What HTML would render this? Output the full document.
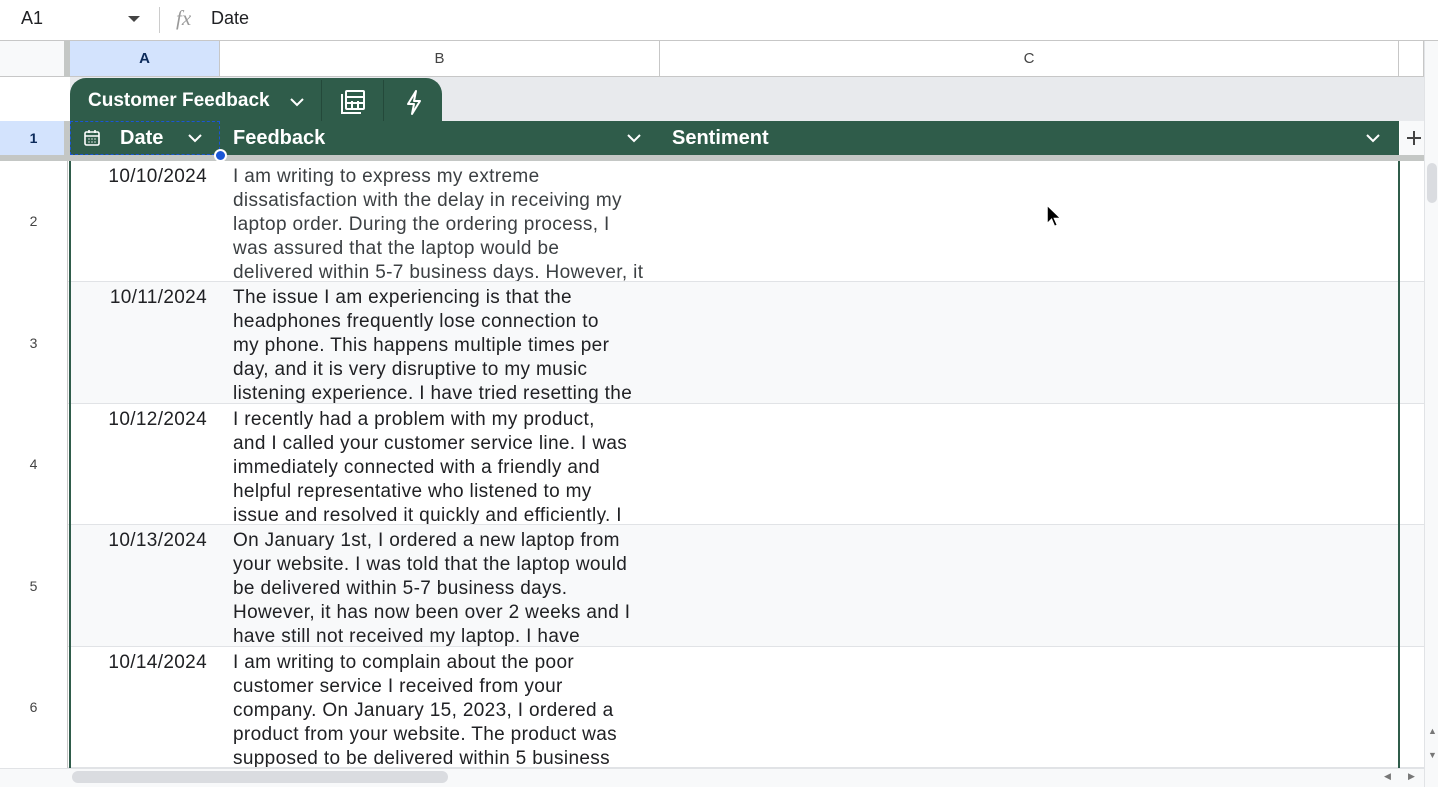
<!DOCTYPE html>
<html><head><meta charset="utf-8"><style>
*{margin:0;padding:0;box-sizing:border-box}
body{width:1438px;height:787px;overflow:hidden;background:#fff;font-family:"Liberation Sans",Arial,sans-serif;position:relative;color:#202124}
.a{position:absolute}
.g{background:#2f5c4a}
.row{position:absolute;left:0;width:1424px;border-bottom:1px solid #e1e3e6}
.rn{position:absolute;left:0;width:67px;text-align:center;font-size:14px;color:#444;background:#fff}
.dt{position:absolute;left:70px;width:137px;text-align:right;font-size:19px;letter-spacing:0.35px;top:5px}
.tx{position:absolute;left:233px;width:420px;font-size:19px;letter-spacing:0.35px;line-height:24px;top:4px;white-space:nowrap;overflow:hidden;color:#202124}
.cell{position:absolute;top:0;bottom:0;overflow:hidden}
</style></head><body>
<div class="a" style="left:0;top:0;width:1438px;height:41px;border-bottom:1px solid #c7c7c7"></div>
<div class="a" style="left:21px;top:8px;font-size:18px">A1</div>
<div class="a" style="left:128px;top:16px;width:0;height:0;border-left:6px solid transparent;border-right:6px solid transparent;border-top:6px solid #444"></div>
<div class="a" style="left:159px;top:7px;width:1px;height:26px;background:#ccc"></div>
<div class="a" style="left:176px;top:6px;font-size:21px;font-style:italic;font-family:'Liberation Serif',serif;color:#999">fx</div>
<div class="a" style="left:211px;top:8px;font-size:18px">Date</div>
<div class="a" style="left:0;top:41px;width:67px;height:36px;background:#f8f9fa;border-bottom:1px solid #c7c7c7"></div>
<div class="a" style="left:64px;top:41px;width:6px;height:36px;background:#c4c7c5"></div>
<div class="a" style="left:70px;top:41px;width:150px;height:36px;background:#d3e3fd;border-right:1px solid #c7c7c7;border-bottom:1px solid #c7c7c7;text-align:center;font-size:15px;font-weight:bold;line-height:35px;color:#0b2a5a">A</div>
<div class="a" style="left:220px;top:41px;width:440px;height:36px;border-right:1px solid #c7c7c7;border-bottom:1px solid #c7c7c7;text-align:center;font-size:15px;line-height:35px;color:#444">B</div>
<div class="a" style="left:660px;top:41px;width:739px;height:36px;border-right:1px solid #c7c7c7;border-bottom:1px solid #c7c7c7;text-align:center;font-size:15px;line-height:35px;color:#444">C</div>
<div class="a" style="left:1399px;top:41px;width:25px;height:36px;border-right:1px solid #c7c7c7;border-bottom:1px solid #c7c7c7"></div>
<div class="a" style="left:1424px;top:41px;width:14px;height:746px;background:#f8f9fa;border-left:1px solid #e1e3e6"></div>
<div class="a" style="left:70px;top:77px;width:1354px;height:44px;background:#e8eaed"></div>
<div class="a g" style="left:70px;top:78px;width:372px;height:44px;border-radius:16px 16px 0 0"></div>
<div class="a" style="left:321px;top:80px;width:1px;height:41px;background:#24493a"></div>
<div class="a" style="left:383px;top:80px;width:1px;height:41px;background:#24493a"></div>
<div class="a" style="left:88px;top:90px;font-size:19px;font-weight:bold;color:#fff">Customer Feedback</div>
<svg class="a" style="left:288px;top:95px" width="18" height="14" viewBox="0 0 18 14"><path d="M3 4l6 6 6-6" stroke="#fff" stroke-width="2" fill="none"/></svg>
<svg class="a" style="left:339px;top:88px" width="28" height="28" viewBox="0 0 28 28" fill="none" stroke="#fff" stroke-width="2"><path d="M3 6v19h19"/><rect x="7" y="3" width="18" height="18" rx="1"/><path d="M7 9h18M13 13v8M19 13v8M7 15h18"/></svg>
<svg class="a" style="left:402px;top:88px" width="24" height="28" viewBox="0 0 24 28" fill="none" stroke="#fff" stroke-width="2" stroke-linejoin="round"><path d="M14 3L6 16h6l-2 10 8-13h-6z"/></svg>
<div class="rn" style="top:121px;height:34px;background:#d3e3fd;line-height:34px;font-weight:bold;color:#0b2a5a">1</div>
<div class="a" style="left:64px;top:121px;width:6px;height:40px;background:#c4c7c5"></div>
<div class="a g" style="left:70px;top:121px;width:1329px;height:34px"></div>
<div class="a" style="left:70px;top:121px;width:150px;height:34px;border:1px dashed #1a56d6"></div>
<svg class="a" style="left:82px;top:128px" width="20" height="20" viewBox="0 0 20 20" fill="none" stroke="#fff" stroke-width="1.6"><rect x="3" y="4" width="14" height="13" rx="1.5"/><path d="M3 8h14M7 2v3M13 2v3"/><path d="M6.5 11h1M9.5 11h1M12.5 11h1M6.5 14h1M9.5 14h1M12.5 14h1" stroke-width="1.5"/></svg>
<div class="a" style="left:120px;top:127px;font-size:20px;font-weight:bold;color:#fff">Date</div>
<svg class="a" style="left:186px;top:131px" width="18" height="14" viewBox="0 0 18 14"><path d="M3 4l6 6 6-6" stroke="#fff" stroke-width="2" fill="none"/></svg>
<div class="a" style="left:233px;top:127px;font-size:20px;font-weight:bold;color:#fff">Feedback</div>
<svg class="a" style="left:625px;top:131px" width="18" height="14" viewBox="0 0 18 14"><path d="M3 4l6 6 6-6" stroke="#fff" stroke-width="2" fill="none"/></svg>
<div class="a" style="left:672px;top:127px;font-size:20px;font-weight:bold;color:#fff">Sentiment</div>
<svg class="a" style="left:1364px;top:131px" width="18" height="14" viewBox="0 0 18 14"><path d="M3 4l6 6 6-6" stroke="#fff" stroke-width="2" fill="none"/></svg>
<div class="a" style="left:1400px;top:121px;width:24px;height:34px;background:#f8f9fa"></div>
<svg class="a" style="left:1405px;top:129px" width="18" height="18" viewBox="0 0 18 18"><path d="M9 2v14M2 9h14" stroke="#444" stroke-width="2"/></svg>
<div class="a" style="left:214px;top:149px;width:13px;height:13px;border-radius:50%;background:#1a56d6;border:2px solid #fff;z-index:5"></div>
<div class="a" style="left:0;top:155px;width:1424px;height:6px;background:#c4c7c5"></div>

<div class="row" style="top:161px;height:121px;background:#fff">
<div class="rn" style="top:0;height:121px;line-height:121px">2</div>
<div class="dt">10/10/2024</div>
<div class="cell" style="left:0;width:660px"><div class="tx" style="color:#3c4043">I am writing to express my extreme<br>dissatisfaction with the delay in receiving my<br>laptop order. During the ordering process, I<br>was assured that the laptop would be<br>delivered within 5-7 business days. However, it</div></div>
</div>
<div class="row" style="top:282px;height:122px;background:#f8f9fa">
<div class="rn" style="top:0;height:122px;line-height:122px">3</div>
<div class="dt">10/11/2024</div>
<div class="cell" style="left:0;width:660px"><div class="tx">The issue I am experiencing is that the<br>headphones frequently lose connection to<br>my phone. This happens multiple times per<br>day, and it is very disruptive to my music<br>listening experience. I have tried resetting the</div></div>
</div>
<div class="row" style="top:404px;height:121px;background:#fff">
<div class="rn" style="top:0;height:121px;line-height:121px">4</div>
<div class="dt">10/12/2024</div>
<div class="cell" style="left:0;width:660px"><div class="tx">I recently had a problem with my product,<br>and I called your customer service line. I was<br>immediately connected with a friendly and<br>helpful representative who listened to my<br>issue and resolved it quickly and efficiently. I</div></div>
</div>
<div class="row" style="top:525px;height:122px;background:#f8f9fa">
<div class="rn" style="top:0;height:122px;line-height:122px">5</div>
<div class="dt">10/13/2024</div>
<div class="cell" style="left:0;width:660px"><div class="tx">On January 1st, I ordered a new laptop from<br>your website. I was told that the laptop would<br>be delivered within 5-7 business days.<br>However, it has now been over 2 weeks and I<br>have still not received my laptop. I have</div></div>
</div>
<div class="row" style="top:647px;height:121px;background:#fff">
<div class="rn" style="top:0;height:121px;line-height:121px">6</div>
<div class="dt">10/14/2024</div>
<div class="cell" style="left:0;width:660px"><div class="tx">I am writing to complain about the poor<br>customer service I received from your<br>company. On January 15, 2023, I ordered a<br>product from your website. The product was<br>supposed to be delivered within 5 business</div></div>
</div>
<div class="a" style="left:67px;top:161px;width:1px;height:607px;background:#c7c7c7"></div>
<div class="a" style="left:69px;top:161px;width:2px;height:607px;background:#2f5c4a"></div>
<div class="a" style="left:1398px;top:161px;width:2px;height:607px;background:#2f5c4a"></div>
<div class="a" style="left:1424px;top:161px;width:1px;height:607px;background:#e1e3e6"></div>
<div class="a" style="left:1427px;top:163px;width:10px;height:40px;border-radius:5px;background:#dadce0"></div>
<div class="a" style="left:1428px;top:726px;font-size:9px;color:#777">▲</div>
<div class="a" style="left:1428px;top:750px;font-size:9px;color:#777">▼</div>
<div class="a" style="left:0;top:768px;width:1424px;height:19px;background:#f8f9fa;border-top:1px solid #e1e3e6"></div>
<div class="a" style="left:72px;top:771px;width:376px;height:12px;border-radius:6px;background:#dadce0"></div>
<div class="a" style="left:1384px;top:771px;font-size:9px;color:#777">◀</div>
<div class="a" style="left:1408px;top:771px;font-size:9px;color:#777">▶</div>
<svg class="a" style="left:1045px;top:203px" width="18" height="26" viewBox="0 0 18 26"><path d="M2 2v19l4.5-4.5 3 7 3-1.3-3-6.7h6.5z" fill="#000" stroke="#fff" stroke-width="1.5"/></svg>
</body></html>
